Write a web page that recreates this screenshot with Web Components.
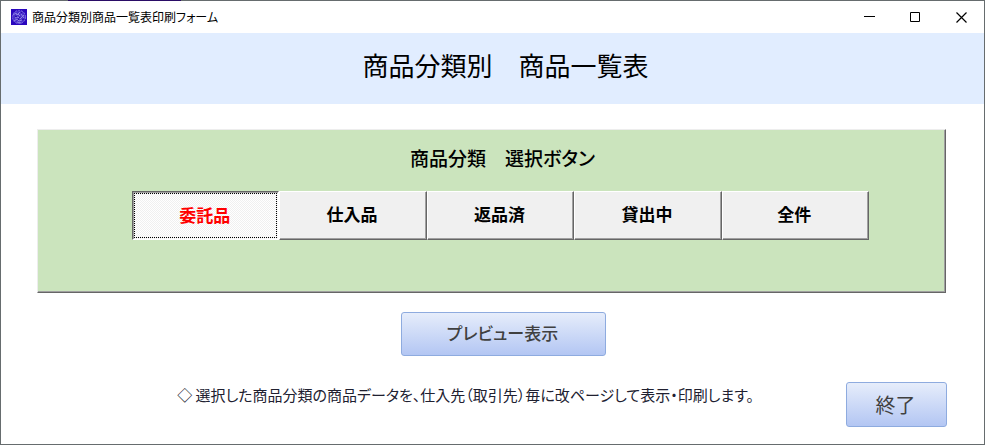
<!DOCTYPE html>
<html lang="ja">
<head>
<meta charset="utf-8">
<title>商品分類別商品一覧表印刷フォーム</title>
<style>
  body {
    margin: 0;
    min-height: 100vh;
    display: flex;
    background: #fff;
    color: #000;
    font-family: "Noto Sans CJK JP", sans-serif;
    font-feature-settings: "palt";
  }
</style>
</head>
<body>
<app-window caption="商品分類別商品一覧表印刷フォーム">
  <form-heading>商品分類別　商品一覧表</form-heading>
  <option-panel header="商品分類　選択ボタン">
    <toggle-option label="委託品" selected></toggle-option>
    <toggle-option label="仕入品"></toggle-option>
    <toggle-option label="返品済"></toggle-option>
    <toggle-option label="貸出中"></toggle-option>
    <toggle-option label="全件"></toggle-option>
  </option-panel>
  <preview-row>
    <form-button label="プレビュー表示"></form-button>
  </preview-row>
  <form-footer>
    ◇ 選択した商品分類の商品データを、仕入先（取引先）毎に改ページして表示・印刷します。
    <form-button slot="action" size="large" label="終了"></form-button>
  </form-footer>
</app-window>

<script>
const windowTemplate = document.createElement('template');

windowTemplate.innerHTML = `
  <style>
    * {
      box-sizing: border-box;
    }
    :host {
      box-sizing: border-box;
      flex: 1;
      display: flex;
      flex-direction: column;
      min-width: 0;
      border: 1px solid #666c6e;
      border-top: 0;
    }
    .window__edge {
      height: 1px;
      background: linear-gradient(90deg, #666c6e 67px, #2a0c66 67px, #2a0c66 180px, #666c6e 180px);
    }
    .window__bar {
      display: flex;
      align-items: center;
      height: 32px;
      padding-left: 10px;
    }
    .window__icon {
      width: 16px;
      height: 16px;
      margin-right: 5px;
    }
    .window__caption {
      flex: 1;
      font-size: 12px;
      line-height: 16px;
      white-space: nowrap;
    }
    button {
      display: flex;
      align-items: center;
      justify-content: center;
      width: 46px;
      height: 30px;
      padding: 0;
      border: 0;
      background: none;
    }
    svg {
      display: block;
    }
  </style>

  <div class='window__edge'></div>
  <div class='window__bar'>
    <svg class='window__icon' viewBox='0 0 16 16' aria-hidden='true'>
      <rect width='16' height='16' fill='#2a06bd'/>
      <circle cx='8' cy='8' r='6.6' fill='#4a30cc' stroke='#7b6ce0' stroke-width='1' stroke-dasharray='2 1'/>
      <path d='M2 6l3-2 1 2 3-3M4 9l3-1 2 2 4-4M3 12l3-2 2 2 3-1M10 5l3 4M6 13l4 1M7 5l2 2' fill='none' stroke='#8f84e6' stroke-width='1'/>
      <path d='M4 7l2 1M9 8l-2 3M11 11l2-1M10 3l1 1' fill='none' stroke='#2407a4' stroke-width='1'/>
    </svg>
    <span class='window__caption'></span>
    <button type='button' aria-label='最小化'>
      <svg width='11' height='11' viewBox='0 0 11 11'><path d='M0 4.5h11' stroke='#000'/></svg>
    </button>
    <button type='button' aria-label='最大化'>
      <svg width='11' height='11' viewBox='0 0 11 11'><path d='M.5 .5h9v9h-9z' fill='none' stroke='#000'/></svg>
    </button>
    <button type='button' aria-label='閉じる'>
      <svg width='11' height='11' viewBox='0 0 11 11'><path d='M.5 .5l10 10M10.5 .5l-10 10' stroke='#000' stroke-width='1.2'/></svg>
    </button>
  </div>
  <slot></slot>
`;

class AppWindow extends HTMLElement {
  constructor() {
    super();

    this._shadowRoot = this.attachShadow({ mode: 'open' });
    this._shadowRoot.appendChild(windowTemplate.content.cloneNode(true));
    this.captionText = this._shadowRoot.querySelector('.window__caption');
  }

  static get observedAttributes() {
    return ['caption'];
  }

  attributeChangedCallback(name, old, newval) {
    this.captionText.textContent = newval;
  }
}

window.customElements.define('app-window', AppWindow);


const headingTemplate = document.createElement('template');

headingTemplate.innerHTML = `
  <style>
    :host {
      display: block;
      padding: 12px 0 19px 26px;
      background: #e1edff;
      text-align: center;
    }
    h1 {
      margin: 0;
      font-size: 26px;
      line-height: 40px;
      font-weight: 400;
    }
  </style>

  <h1><slot></slot></h1>
`;

class FormHeading extends HTMLElement {
  constructor() {
    super();

    this._shadowRoot = this.attachShadow({ mode: 'open' });
    this._shadowRoot.appendChild(headingTemplate.content.cloneNode(true));
  }
}

window.customElements.define('form-heading', FormHeading);


const panelTemplate = document.createElement('template');

panelTemplate.innerHTML = `
  <style>
    :host {
      display: block;
      margin: 25px 38px 0 36px;
      padding-bottom: 52px;
      border: 1px solid;
      border-color: #ededed #666 #666 #ededed;
      box-shadow: inset -1px -1px #a0a0a0;
      background: #cbe4bd;
    }
    h2 {
      margin: 0;
      padding: 13px 0 18px 22px;
      font-size: 19px;
      line-height: 30px;
      font-weight: 500;
      text-align: center;
    }
    .panel__options {
      display: flex;
      margin: 0 76px 0 94px;
    }
  </style>

  <h2 id='header'></h2>
  <div class='panel__options' role='group' aria-labelledby='header'>
    <slot></slot>
  </div>
`;

class OptionPanel extends HTMLElement {
  constructor() {
    super();

    this._shadowRoot = this.attachShadow({ mode: 'open' });
    this._shadowRoot.appendChild(panelTemplate.content.cloneNode(true));
    this.header = this._shadowRoot.querySelector('h2');
    this.addEventListener('click', (e) => this.select(e.target));
  }

  static get observedAttributes() {
    return ['header'];
  }

  attributeChangedCallback(name, old, newval) {
    this.header.textContent = newval;
  }

  select(option) {
    if (option.localName !== 'toggle-option') return;
    this.querySelectorAll('toggle-option').forEach((item) => {
      item.toggleAttribute('selected', item === option);
    });
  }
}

window.customElements.define('option-panel', OptionPanel);


const toggleTemplate = document.createElement('template');

toggleTemplate.innerHTML = `
  <style>
    :host {
      display: block;
      flex: 1;
    }
    button {
      display: block;
      box-sizing: border-box;
      width: 100%;
      height: 49px;
      padding: 0 2px 5px 0;
      border: 1px solid;
      border-color: #fff #666 #666 #fff;
      border-radius: 0;
      outline: 0;
      box-shadow: inset -1px -1px #a0a0a0;
      background: #f0f0f0;
      color: #000;
      font: inherit;
      font-size: 17px;
      font-weight: 700;
    }
    button[aria-pressed='true'] {
      padding: 0;
      border-color: #666 #fff #fff #666;
      box-shadow: inset 1px 1px #a0a0a0;
      background: repeating-conic-gradient(#f0f0f0 0 25%, #fff 0 50%) 0 0 / 2px 2px;
      color: #f00;
    }
    button[aria-pressed='true'] .toggle__focus {
      display: flex;
      align-items: center;
      justify-content: center;
      box-sizing: border-box;
      height: 45px;
      margin: 1px;
      padding: 0 2px 3px 0;
      border: 1px dotted #000;
    }
  </style>

  <button type='button' aria-pressed='false'><span class='toggle__focus'></span></button>
`;

class ToggleOption extends HTMLElement {
  constructor() {
    super();

    this._shadowRoot = this.attachShadow({ mode: 'open' });
    this._shadowRoot.appendChild(toggleTemplate.content.cloneNode(true));
    this.button = this._shadowRoot.querySelector('button');
  }

  static get observedAttributes() {
    return ['label', 'selected'];
  }

  attributeChangedCallback() {
    this.render();
  }

  render() {
    this.button.firstElementChild.textContent = this.getAttribute('label');
    this.button.setAttribute('aria-pressed', this.hasAttribute('selected'));
  }
}

window.customElements.define('toggle-option', ToggleOption);


const buttonTemplate = document.createElement('template');

buttonTemplate.innerHTML = `
  <style>
    :host {
      display: block;
    }
    button {
      display: block;
      width: 205px;
      height: 44px;
      padding: 0 2px 3px 0;
      border: 1px solid #8eabdf;
      border-radius: 3px;
      background: linear-gradient(#e6edfb, #b3c6f3);
      color: #404040;
      font: inherit;
      font-size: 17px;
      font-weight: 500;
    }
    :host([size='large']) button {
      width: 101px;
      height: 45px;
      padding: 0 2px 1px 0;
      font-size: 20px;
      font-weight: 400;
    }
  </style>

  <button type='button'></button>
`;

class FormButton extends HTMLElement {
  constructor() {
    super();

    this._shadowRoot = this.attachShadow({ mode: 'open' });
    this._shadowRoot.appendChild(buttonTemplate.content.cloneNode(true));
    this.button = this._shadowRoot.querySelector('button');
  }

  static get observedAttributes() {
    return ['label'];
  }

  attributeChangedCallback(name, old, newval) {
    this.button.textContent = newval;
  }
}

window.customElements.define('form-button', FormButton);


const rowTemplate = document.createElement('template');

rowTemplate.innerHTML = `
  <style>
    :host {
      display: flex;
      justify-content: center;
      padding: 19px 0 26px 22px;
    }
  </style>

  <slot></slot>
`;

class PreviewRow extends HTMLElement {
  constructor() {
    super();

    this._shadowRoot = this.attachShadow({ mode: 'open' });
    this._shadowRoot.appendChild(rowTemplate.content.cloneNode(true));
  }
}

window.customElements.define('preview-row', PreviewRow);


const footerTemplate = document.createElement('template');

footerTemplate.innerHTML = `
  <style>
    :host {
      display: flex;
      align-items: flex-start;
      padding: 0 37px 16px 84px;
    }
    p {
      flex: 1;
      margin: 0;
      padding-top: 2px;
      color: #202030;
      font-size: 15px;
      line-height: 22px;
      font-weight: 400;
      text-align: center;
    }
  </style>

  <p><slot></slot></p>
  <slot name='action'></slot>
`;

class FormFooter extends HTMLElement {
  constructor() {
    super();

    this._shadowRoot = this.attachShadow({ mode: 'open' });
    this._shadowRoot.appendChild(footerTemplate.content.cloneNode(true));
  }
}

window.customElements.define('form-footer', FormFooter);
</script>
</body>
</html>
